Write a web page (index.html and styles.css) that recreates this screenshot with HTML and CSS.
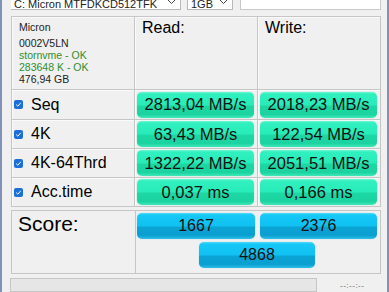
FILE: index.html
```html
<!DOCTYPE html>
<html lang="en">
<head>
	<meta charset="UTF-8">
	<title>AS SSD Benchmark</title>
	<link rel="stylesheet" href="styles.css">
</head>
<body>
	<div id="win">
		<div class="toolbar">
			<div class="combo drive">
				<span>C: Micron MTFDKCD512TFK</span>
				<svg class="arrow" width="9" height="5" viewBox="0 0 9 5"><path d="M0.5 0.5 L4.5 4.5 L8.5 0.5" fill="none" stroke="#444" stroke-width="1"/></svg>
			</div>
			<div class="combo size">
				<span>1GB</span>
				<svg class="arrow" width="9" height="5" viewBox="0 0 9 5"><path d="M0.5 0.5 L4.5 4.5 L8.5 0.5" fill="none" stroke="#444" stroke-width="1"/></svg>
			</div>
			<div class="field"></div>
		</div>

		<div class="grid">
			<div class="cell info">
				<div class="model">Micron</div>
				<div>0002V5LN</div>
				<div class="ok">stornvme - OK</div>
				<div class="ok">283648 K - OK</div>
				<div>476,94 GB</div>
			</div>
			<div class="cell head">Read:</div>
			<div class="cell head">Write:</div>

			<div class="cell label"><span class="check"><svg width="9" height="9" viewBox="0 0 9 9"><path d="M2.2 4.6 L3.8 6.2 L6.8 2.8" fill="none" stroke="#fff" stroke-width="1"/></svg></span>Seq</div>
			<div class="cell val"><div class="bar">2813,04 MB/s</div></div>
			<div class="cell val"><div class="bar">2018,23 MB/s</div></div>

			<div class="cell label"><span class="check"><svg width="9" height="9" viewBox="0 0 9 9"><path d="M2.2 4.6 L3.8 6.2 L6.8 2.8" fill="none" stroke="#fff" stroke-width="1"/></svg></span>4K</div>
			<div class="cell val"><div class="bar">63,43 MB/s</div></div>
			<div class="cell val"><div class="bar">122,54 MB/s</div></div>

			<div class="cell label"><span class="check"><svg width="9" height="9" viewBox="0 0 9 9"><path d="M2.2 4.6 L3.8 6.2 L6.8 2.8" fill="none" stroke="#fff" stroke-width="1"/></svg></span>4K-64Thrd</div>
			<div class="cell val"><div class="bar">1322,22 MB/s</div></div>
			<div class="cell val"><div class="bar">2051,51 MB/s</div></div>

			<div class="cell label"><span class="check"><svg width="9" height="9" viewBox="0 0 9 9"><path d="M2.2 4.6 L3.8 6.2 L6.8 2.8" fill="none" stroke="#fff" stroke-width="1"/></svg></span>Acc.time</div>
			<div class="cell val"><div class="bar">0,037 ms</div></div>
			<div class="cell val"><div class="bar">0,166 ms</div></div>
		</div>

		<div class="score">
			<div class="score-label">Score:</div>
			<div class="score-bars">
				<div class="sbar">1667</div>
				<div class="sbar">2376</div>
				<div class="sbar total">4868</div>
			</div>
		</div>

		<div class="status">
			<div class="progress"></div>
			<span class="time">--:--:--</span>
		</div>
	</div>
</body>
</html>
```

FILE: styles.css
```css
* {
	margin: 0;
	padding: 0;
	box-sizing: border-box;
}
body {
	background: #f0f0f0;
	font-family: "Liberation Sans", Arial, sans-serif;
	color: #000;
	overflow: hidden;
}
#win {
	width: 389px;
	height: 292px;
	border-left: 2px solid #8192b6;
	border-right: 2px solid #8192b6;
	padding: 0 6px 0 9px;
	background: #f0f0f0;
}
.toolbar {
	height: 10px;
	display: flex;
	align-items: flex-end;
	overflow: hidden;
	font-size: 11px;
}
.combo {
	height: 20px;
	background: #fff;
	border: 1px solid #b9b9b9;
	display: flex;
	align-items: center;
	padding: 8px 4px 0 3px;
	line-height: 11px;
	color: #222;
}
.combo span {
	flex: 1;
	white-space: nowrap;
}
.combo .arrow {
	margin-top: -6px;
}
.drive {
	width: 171px;
	margin-left: -1px;
}
.size {
	width: 46px;
	margin-left: 6px;
}
.field {
	width: 141px;
	height: 20px;
	margin-left: 7px;
	background: #fff;
	border: 1px solid #c8c8c8;
}
.grid {
	margin-top: 6px;
	display: grid;
	grid-template-columns: 123px 123px 123px;
	grid-template-rows: 73px 30px 29px 29px 29px;
	border-top: 1px solid #c6c6c6;
	border-left: 1px solid #c6c6c6;
	width: 370px;
}
.cell {
	border-right: 1px solid #c6c6c6;
	border-bottom: 1px solid #c6c6c6;
	box-shadow: inset 1px 1px 0 #fafafa;
}
.info {
	padding: 4px 7px;
	font-size: 10.5px;
	line-height: 12px;
	color: #222;
}
.info .model {
	margin-bottom: 4px;
}
.info .ok {
	color: #2f8f2f;
}
.head {
	font-size: 16px;
	padding: 2px 7px;
}
.label {
	display: flex;
	align-items: center;
	font-size: 16px;
	padding-left: 2px;
}
.check {
	width: 9px;
	height: 9px;
	background: #1b6fd6;
	border-radius: 2px;
	margin-right: 8px;
	display: flex;
}
.val {
	display: flex;
	align-items: center;
	padding: 0 3px 0 2px;
}
.bar {
	width: 100%;
	height: 26px;
	border-radius: 5px;
	display: flex;
	align-items: center;
	justify-content: center;
	font-size: 16.5px;
	color: #111;
	background: linear-gradient(#6ff6d2 0, #31f0bf 2px, #27ecb8 50%, #1dd8a4 54%, #1bd3a0 86%, #3fe8b9 100%);
	box-shadow: 0 0 1px #7fe6c8;
}
.score {
	margin-top: 3px;
	width: 370px;
	height: 64px;
	border: 1px solid #c6c6c6;
	display: flex;
}
.score-label {
	width: 124px;
	border-right: 1px solid #c6c6c6;
	font-size: 21px;
	padding: 1px 6px;
}
.score-bars {
	display: grid;
	grid-template-columns: 118px 117px;
	grid-template-rows: 26px 26px;
	column-gap: 5px;
	row-gap: 3px;
	padding: 2px 0 0 1px;
}
.sbar {
	border-radius: 5px;
	display: flex;
	align-items: center;
	justify-content: center;
	font-size: 16px;
	color: #111;
	background: linear-gradient(#52d9fb 0, #15c8f7 2px, #10c1f2 50%, #0aa4d4 54%, #0a9fd0 86%, #2fbfe9 100%);
	box-shadow: 0 0 1px #6fd2f2;
}
.sbar.total {
	grid-column: 1 / 3;
	justify-self: center;
	width: 116px;
}
.status {
	margin-top: 4px;
	display: flex;
	align-items: center;
}
.progress {
	width: 307px;
	height: 14px;
	margin-left: -1px;
	background: #e6e6e6;
	border: 1px solid #c6c6c6;
}
.time {
	margin-left: 23px;
	font-size: 8px;
	color: #666;
	letter-spacing: 0.5px;
}
```
